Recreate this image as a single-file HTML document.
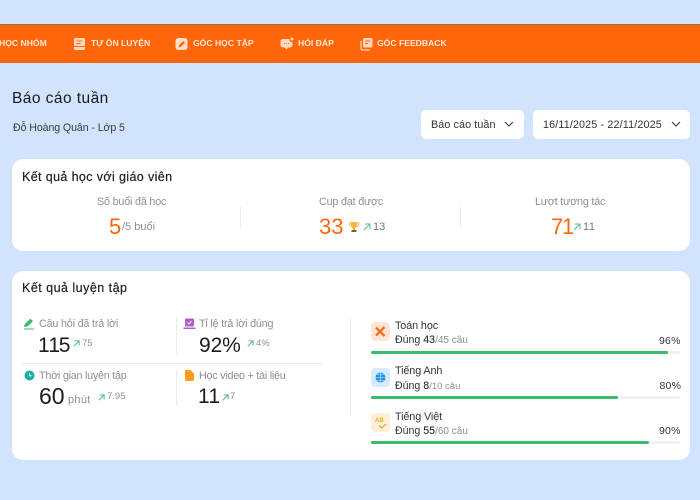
<!DOCTYPE html>
<html lang="vi">
<head>
<meta charset="utf-8">
<style>
*{box-sizing:border-box}
html,body{margin:0;padding:0}
body{width:700px;height:500px;overflow:hidden;background:#d1e3fe;position:relative;font-family:"Liberation Sans","Noto Sans CJK SC",sans-serif;color:#1c1c1f}
.t{position:absolute;white-space:nowrap;line-height:1}
.a{position:absolute}
svg{position:absolute;display:block}
.nav{font-size:8.6px;font-weight:700;color:#ffe6d6;top:39px}
.card{position:absolute;left:12px;width:678px;background:#fff;border-radius:11px}
.lab{font-size:10.8px;color:#8f8f94;letter-spacing:-.2px}
.big{font-size:21px;color:#1c1c1f}
.org{font-size:22px;color:#ff6609}
.sm{font-size:10px;color:#8f8f94}
.sub{font-size:10.6px;color:#333}
.sub b{font-weight:400;color:#111}
.sub i{font-style:normal;color:#8f8f94;font-size:10px}
.nm{font-size:10.8px;color:#333;letter-spacing:-.1px}
.pc{font-size:10.5px;color:#333;letter-spacing:.2px}
.hd{font-size:12.5px;color:#222;-webkit-text-stroke:.2px #222}
.track{position:absolute;left:371px;width:309px;height:3px;background:#eff1f4;border-radius:2px}
.fill{height:3px;background:#3dbb6c;border-radius:2px}
.ic{position:absolute;left:371px;width:19px;height:19px;border-radius:4px}
.sel{position:absolute;top:110px;height:29px;background:#fff;border-radius:5px}
.dv{position:absolute;background:#ececef;width:1px}
</style>
</head>
<body>
<div class="a" style="left:0;top:24px;width:700px;height:39px;background:#ff6609;border-top:1px solid #a06a48"></div>

<div class="t nav" style="left:-1px">HỌC NHÓM</div>
<svg style="left:73px;top:37px" width="13" height="14" viewBox="0 0 13 14"><path d="M2 1h9a1 1 0 0 1 1 1v7H1V2a1 1 0 0 1 1-1z" fill="#ffd9bf"/><path d="M1 10h11v2a1 1 0 0 1-1 1H2a1 1 0 0 1-1-1z" fill="#ffd9bf"/><path d="M3.500 4h6M3.500 6.500h4" stroke="#ff6609" stroke-width="1"/></svg>
<div class="t nav" style="left:91px">TỰ ÔN LUYỆN</div>
<svg style="left:175px;top:37px" width="13" height="14" viewBox="0 0 13 14"><rect x="0.500" y="1" width="12" height="12" rx="3" fill="#ffe0cc"/><path d="M3.500 10.500l.7-2.500 4-4 1.800 1.800-4 4z" fill="#ff6609"/></svg>
<div class="t nav" style="left:193px">GÓC HỌC TẬP</div>
<svg style="left:280px;top:36px" width="14" height="15" viewBox="0 0 14 15"><path d="M3 3h6.500a2.500 2.500 0 0 0 3 3v3a2.500 2.500 0 0 1-2.500 2.500H8L6.500 13.500 5 11.500H3A2.500 2.500 0 0 1 .5 9V5.500A2.500 2.500 0 0 1 3 3z" fill="#ffd9bf"/><circle cx="12" cy="3" r="1.500" fill="#ffd9bf"/><path d="M4 7.500h.8M6.200 7.500H7M8.400 7.500h.8" stroke="#ff6609" stroke-width="1"/></svg>
<div class="t nav" style="left:298px">HỎI ĐÁP</div>
<svg style="left:360px;top:37px" width="13" height="14" viewBox="0 0 13 14"><rect x="3" y="1" width="9.500" height="9.500" rx="1.500" fill="#ffd9bf"/><path d="M5 4h5M5 6.500h3" stroke="#ff6609" stroke-width="1"/><path d="M1 4v7.500A1.500 1.500 0 0 0 2.500 13H10" stroke="#ffd9bf" stroke-width="1.200" fill="none"/></svg>
<div class="t nav" style="left:377px">GÓC FEEDBACK</div>

<div class="t" style="left:12px;top:90.500px;font-size:15.500px;letter-spacing:.45px;color:#1a1a1e">Báo cáo tuần</div>
<div class="t" style="left:13px;top:122.500px;font-size:10.600px;letter-spacing:-.08px;color:#3a3a40">Đỗ Hoàng Quân - Lớp 5</div>

<div class="sel" style="left:421px;width:103px"></div>
<div class="t" style="left:431px;top:119.500px;font-size:10.800px;letter-spacing:.08px;color:#333">Báo cáo tuần</div>
<svg style="left:504px;top:121px" width="10" height="7" viewBox="0 0 10 7"><path d="M1 1l4 4 4-4" fill="none" stroke="#333" stroke-width="1"/></svg>
<div class="sel" style="left:533px;width:157px"></div>
<div class="t" style="left:543px;top:119.500px;font-size:10.800px;letter-spacing:.12px;color:#333">16/11/2025 - 22/11/2025</div>
<svg style="left:671px;top:121px" width="10" height="7" viewBox="0 0 10 7"><path d="M1 1l4 4 4-4" fill="none" stroke="#333" stroke-width="1"/></svg>

<div class="card" style="top:159px;height:92px"></div>
<div class="t hd" style="left:22px;top:170.500px;letter-spacing:.38px">Kết quả học với giáo viên</div>

<div class="t lab" style="left:97px;top:196.500px">Số buổi đã học</div>
<div class="t org" style="left:109px;top:216px">5</div>
<div class="t sm" style="left:122px;top:222px;font-size:11px">/5 buổi</div>
<div class="dv" style="left:240px;top:207px;height:22px"></div>

<div class="t lab" style="left:319px;top:196.500px">Cup đạt được</div>
<div class="t org" style="left:319px;top:216px">33</div>
<svg style="left:348px;top:221px" width="12" height="12" viewBox="0 0 12 12"><path d="M3 1h6v3.500a3 3 0 0 1-6 0z" fill="#f5b83d"/><path d="M3 2H1.200c0 2 .8 3 2 3M9 2h1.800c0 2-.8 3-2 3" fill="none" stroke="#f5b83d"/><path d="M5.400 7h1.200v2H5.400z" fill="#b67a2c"/><path d="M3.500 9h5v2h-5z" fill="#8a5a2b"/></svg>
<svg style="left:363px;top:223px" width="8" height="8" viewBox="0 0 8 8"><path d="M1 7l6-6M2 1h5v5" fill="none" stroke="#4fbf7b" stroke-width="1"/></svg>
<div class="t sm" style="left:373px;top:222px;font-size:11px;color:#777">13</div>
<div class="dv" style="left:460px;top:207px;height:22px"></div>

<div class="t lab" style="left:535px;top:196.500px">Lượt tương tác</div>
<div class="t org" style="left:551px;top:216px;letter-spacing:-1.2px;font-kerning:none">71</div>
<svg style="left:573px;top:223px" width="8" height="8" viewBox="0 0 8 8"><path d="M1 7l6-6M2 1h5v5" fill="none" stroke="#4fbf7b" stroke-width="1"/></svg>
<div class="t sm" style="left:583px;top:222px;font-size:11px;color:#777;font-kerning:none;letter-spacing:-.3px">11</div>

<div class="card" style="top:271px;height:189px"></div>
<div class="t hd" style="left:22px;top:282px;letter-spacing:.48px">Kết quả luyện tập</div>

<svg style="left:23px;top:318px" width="13" height="12" viewBox="0 0 13 12"><path d="M1 9l.8-3L7.500.8l2.500 2.500L4.500 8.500z" fill="#3dbb6c"/><path d="M1 11h10" stroke="#3dbb6c" stroke-width="1"/></svg>
<div class="t lab" style="left:39px;top:319px">Câu hỏi đã trả lời</div>
<div class="t big" style="left:38px;top:335px;font-kerning:none;letter-spacing:-1.3px">115</div>
<svg style="left:73px;top:340px" width="7" height="7" viewBox="0 0 8 8"><path d="M1 7l6-6M2 1h5v5" fill="none" stroke="#4fbf7b" stroke-width="1.200"/></svg>
<div class="t sm" style="left:82px;top:339px;font-size:9.500px">75</div>

<div class="dv" style="left:176px;top:318px;height:37px"></div>
<svg style="left:183px;top:318px" width="13" height="12" viewBox="0 0 13 12"><rect x="2" y="0.500" width="9" height="8" rx="1" fill="#b05fc9"/><path d="M4.500 4.500l1.500 1.500 2.500-3" fill="none" stroke="#fff" stroke-width=".9"/><path d="M.5 9.500h12v1.500H.5z" fill="#b05fc9"/></svg>
<div class="t lab" style="left:199px;top:319px">Tỉ lệ trả lời đúng</div>
<div class="t big" style="left:199px;top:335px;letter-spacing:-.1px">92%</div>
<svg style="left:247px;top:340px" width="7" height="7" viewBox="0 0 8 8"><path d="M1 7l6-6M2 1h5v5" fill="none" stroke="#4fbf7b" stroke-width="1.200"/></svg>
<div class="t sm" style="left:256px;top:339px;font-size:9.500px">4%</div>

<div class="a" style="left:22px;top:363px;width:300px;height:1px;background:#ececef"></div>

<svg style="left:24px;top:370px" width="11" height="11" viewBox="0 0 11 11"><circle cx="5.500" cy="5.500" r="5" fill="#17b3a8"/><path d="M5.500 2.800v3h2.200" fill="none" stroke="#fff" stroke-width="1"/></svg>
<div class="t lab" style="left:39px;top:371px;letter-spacing:-.25px">Thời gian luyện tập</div>
<div class="t big" style="left:39px;top:385px;font-size:23px">60</div>
<div class="t sm" style="left:68px;top:395px;font-size:11px;letter-spacing:.3px">phút</div>
<svg style="left:98px;top:394px" width="7" height="7" viewBox="0 0 8 8"><path d="M1 7l6-6M2 1h5v5" fill="none" stroke="#4fbf7b" stroke-width="1.200"/></svg>
<div class="t sm" style="left:107px;top:391.500px;font-size:9.500px">7.95</div>

<div class="dv" style="left:176px;top:370px;height:36px"></div>
<svg style="left:185px;top:370px" width="9" height="11" viewBox="0 0 9 11"><path d="M1 0h4.500L9 3.500V10a1 1 0 0 1-1 1H1a1 1 0 0 1-1-1V1a1 1 0 0 1 1-1z" fill="#ff9d1c"/></svg>
<div class="t lab" style="left:199px;top:371px;letter-spacing:-.25px">Học video + tài liệu</div>
<div class="t big" style="left:198px;top:386px;font-kerning:none;letter-spacing:-1.3px">11</div>
<svg style="left:222px;top:394px" width="7" height="7" viewBox="0 0 8 8"><path d="M1 7l6-6M2 1h5v5" fill="none" stroke="#4fbf7b" stroke-width="1.200"/></svg>
<div class="t sm" style="left:230px;top:391.500px;font-size:9.500px">7</div>

<div class="dv" style="left:350px;top:318px;height:97px"></div>

<div class="ic" style="top:322px;background:#fde5d6"></div>
<svg style="left:375px;top:326px" width="11" height="11" viewBox="0 0 11 11"><path d="M1 1.500l8.500 8.500M9.500 1l-8.500 8.500" stroke="#ff6a13" stroke-width="2.300"/></svg>
<div class="t nm" style="left:395px;top:320.500px">Toán học</div>
<div class="t sub" style="left:395px;top:335px">Đúng <b>43</b><i>/45 câu</i></div>
<div class="t pc" style="left:659px;top:335.500px">96%</div>
<div class="track" style="top:351px"><div class="fill" style="width:297px"></div></div>

<div class="ic" style="top:368px;background:#d6ebfd"></div>
<svg style="left:375px;top:372px" width="11" height="11" viewBox="0 0 11 11"><circle cx="5.500" cy="5.500" r="5" fill="#2394e8"/><path d="M.5 5.500h10M5.500.5v10M2 2.500h7M2 8.500h7" stroke="#d6ebfd" stroke-width=".6"/></svg>
<div class="t nm" style="left:395px;top:366px">Tiếng Anh</div>
<div class="t sub" style="left:395px;top:380.500px">Đúng <b>8</b><i style="font-size:9.500px">/10 câu</i></div>
<div class="t pc" style="left:659.500px;top:380.500px">80%</div>
<div class="track" style="top:396px"><div class="fill" style="width:247px"></div></div>

<div class="ic" style="top:413px;background:#fef0d6"></div>
<div class="t" style="left:375px;top:418px;font-size:6px;font-weight:700;color:#f2aa1f">AB</div>
<svg style="left:378px;top:423px" width="9" height="6" viewBox="0 0 9 6"><path d="M1 2.500l2.500 2.500L8 1" fill="none" stroke="#f2aa1f" stroke-width="1.200"/></svg>
<div class="t nm" style="left:395px;top:411.500px">Tiếng Việt</div>
<div class="t sub" style="left:395px;top:425.500px">Đúng <b>55</b><i>/60 câu</i></div>
<div class="t pc" style="left:659px;top:425.500px">90%</div>
<div class="track" style="top:441px"><div class="fill" style="width:278px"></div></div>
</body>
</html>
